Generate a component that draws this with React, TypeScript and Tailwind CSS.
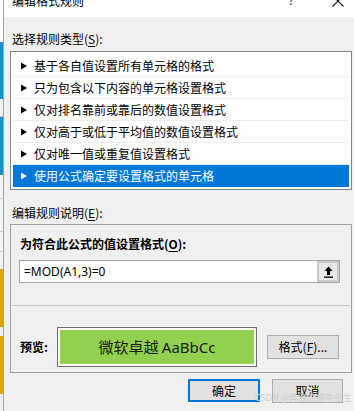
import React from "react";

const rules = [
  "基于各自值设置所有单元格的格式",
  "只为包含以下内容的单元格设置格式",
  "仅对排名靠前或靠后的数值设置格式",
  "仅对高于或低于平均值的数值设置格式",
  "仅对唯一值或重复值设置格式",
  "使用公式确定要设置格式的单元格",
];

function Tri({ white }: { white?: boolean }) {
  return (
    <svg width="6" height="8" viewBox="0 0 6 8" className="shrink-0">
      <polygon points="0,0.5 6,4 0,7.5" fill={white ? "#ffffff" : "#000000"} />
    </svg>
  );
}

function LeftStrip() {
  return (
    <div className="w-[3px] h-full flex flex-col shrink-0">
      <div className="h-[42px] bg-white" />
      <div className="h-[57px] bg-[#1192d2]" />
      <div className="h-[18px] bg-[#f2f2f2] border-b border-[#c8c8c8]" />
      <div className="h-[58px] bg-[#1192d2]" />
      <div className="h-[24px] bg-[#f4f4f4] border-b border-[#cfcfcf]" />
      <div className="h-[33px] bg-[#f4f4f4] border-b border-[#cfcfcf]" />
      <div className="h-[20px] bg-[#f4f4f4] border-b border-[#cfcfcf]" />
      <div className="h-[17px] bg-[#f4f4f4]" />
      <div className="h-[58px] bg-[#e2a104]" />
      <div className="h-[9px] bg-[#efefef]" />
      <div className="h-[58px] bg-[#e2a104]" />
      <div className="flex-1 bg-[#efefef]" />
    </div>
  );
}

export default function App() {
  return (
    <div className="w-[354px] h-[411px] flex overflow-hidden relative text-black font-['Microsoft_YaHei','Noto_Sans_CJK_SC',sans-serif] text-[12px] leading-[16px]">
      <LeftStrip />
      <div className="w-px h-full bg-[#a3a3a3] shrink-0" />
      <div className="flex-1 flex flex-col bg-[#f0f0f0] min-w-0">
        {/* title bar */}
        <div className="h-[17px] bg-white overflow-hidden flex items-start shrink-0">
          <div className="-mt-[7px] pl-[8px] text-[12px] leading-[16px]">编辑格式规则</div>
          <div className="-mt-[8px] ml-auto text-[12px] leading-[16px] text-[#333]">?</div>
          <div className="shrink-0 w-[12px] h-[12px] -mt-[5px] ml-[38px] mr-[10px] relative">
            <svg width="12" height="12" viewBox="0 0 12 12" className="block w-[12px] h-[12px]">
              <path d="M0.5 0.5 L11.5 11.5 M11.5 0.5 L0.5 11.5" stroke="#1a1a1a" strokeWidth="1.1" fill="none" />
            </svg>
          </div>
        </div>

        <div className="flex flex-col pl-[6px]">
          <div className="mt-[14px] pl-[2px]">
            选择规则类型(<span className="underline underline-offset-2">S</span>):
          </div>

          {/* rule list */}
          <div className="mt-[4px] w-[342px] h-[139px] border border-[#82878f] bg-white pt-[3px] pb-[2px] px-[2px] flex flex-col">
            {rules.map((r, i) => {
              const sel = i === 5;
              return (
                <div
                  key={r}
                  className={
                    sel
                      ? "h-[22px] flex items-center bg-[#0078d7] text-white pl-[8px]"
                      : "h-[22px] flex items-center border-b border-[#ededed] pl-[8px]"
                  }
                >
                  <Tri white={sel} />
                  <span className="ml-[7px]">{r}</span>
                </div>
              );
            })}
          </div>

          <div className="mt-[15px] pl-[2px]">
            编辑规则说明(<span className="underline underline-offset-2">E</span>):
          </div>

          {/* description box */}
          <div className="mt-[3px] w-[342px] h-[149px] border border-[#a0a0a0] flex flex-col pl-[8px] pr-[10px] pt-[11px]">
            <div className="font-bold ml-[1px]">
              为符合此公式的值设置格式(<span className="underline underline-offset-2">O</span>):
            </div>
            <div className="mt-[8px] w-[321px] h-[23px] border border-[#a5a5a5] bg-white flex items-stretch">
              <div className="flex-1 flex items-center pl-[4px] font-['Noto_Sans','Noto_Sans_CJK_SC',sans-serif] text-[12px]">
                =MOD(A1,3)=0
              </div>
              <div className="w-[22px] bg-[#c9c9c9] p-[2px] flex">
                <div className="flex-1 bg-[#e8e8e8] flex items-center justify-center">
                  <svg width="9" height="12" viewBox="0 0 9 12">
                    <polygon points="4.5,0.5 8.5,5 6,5 6,9 3,9 3,5 0.5,5" fill="#000" />
                    <rect x="0" y="10.5" width="9" height="1.3" fill="#000" />
                  </svg>
                </div>
              </div>
            </div>
            <div className="mt-[22px] -ml-[7px] -mr-[9px] h-px bg-[#c8c8c8]" />
            <div className="mt-[21px] flex items-center">
              <div className="font-bold w-[37px] ml-[1px]">预览:</div>
              <div className="w-[200px] h-[40px] border border-[#6e6e6e] bg-white p-[2px] flex">
                <div className="flex-1 bg-[#92d050] flex items-center justify-center text-[15px] leading-[20px] text-[#1a1a1a]">
                  微软卓越&nbsp; <span className="font-['Noto_Sans',sans-serif]">AaBbCc</span>
                </div>
              </div>
              <div className="ml-[10px] w-[72px] h-[24px] bg-[#e1e1e1] border border-[#adadad] flex items-center justify-center">
                格式(<span className="underline underline-offset-2">F</span>)...
              </div>
            </div>
          </div>

          {/* buttons */}
          <div className="mt-[6px] w-[342px] flex justify-end pr-[9px] gap-[12px]">
            <div className="w-[72px] h-[23px] border-2 border-[#0078d7] bg-[#e1e1e1] flex items-center justify-center">
              确定
            </div>
            <div className="w-[71px] h-[24px] border border-[#adadad] bg-[#e1e1e1] flex items-center justify-center">
              取消
            </div>
          </div>
        </div>
      </div>

      <div className="absolute left-[255px] top-[392px] text-[9px] leading-[12px] text-[#cfcfcf] whitespace-nowrap">
        CSDN @奔跑的蜗牛先生
      </div>
    </div>
  );
}
